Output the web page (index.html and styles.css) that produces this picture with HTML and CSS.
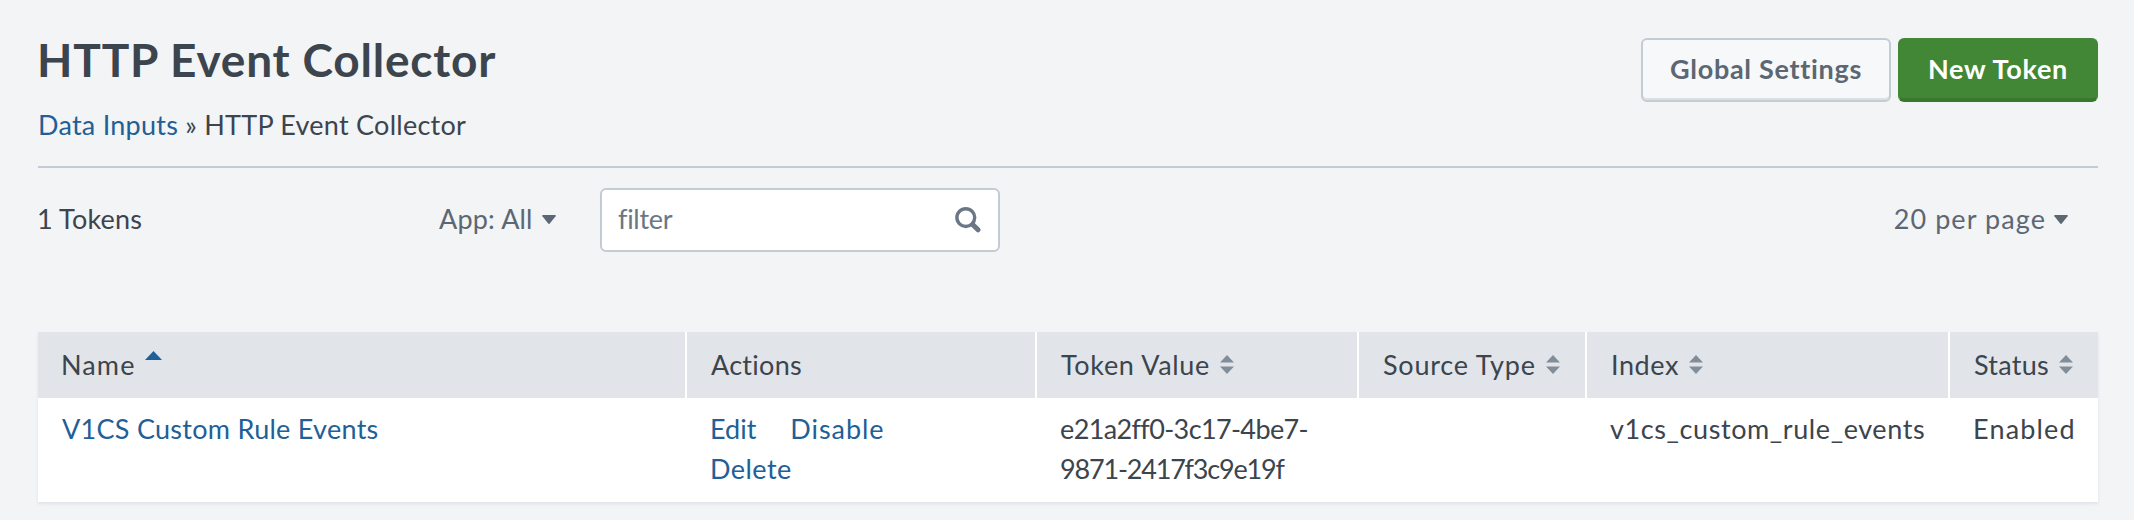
FILE: index.html
```html
<!DOCTYPE html>
<html lang="en">
<head>
<meta charset="utf-8">
<title>HTTP Event Collector</title>
<link rel="stylesheet" href="styles.css">
</head>
<body>
<main class="page">
  <header class="page-header">
    <div class="heading">
      <h1 class="title">HTTP Event Collector</h1>
      <nav class="breadcrumb"><a class="link" href="#">Data Inputs</a><span class="crumb-sep">»</span><span>HTTP Event Collector</span></nav>
    </div>
    <div class="header-actions">
      <button class="btn btn-default" type="button">Global Settings</button>
      <button class="btn btn-primary" type="button">New Token</button>
    </div>
  </header>

  <section class="toolbar">
    <div class="token-count">1 Tokens</div>
    <div class="dropdown app-filter"><span>App: All</span><svg class="caret" viewBox="0 0 14 9"><path d="M1.2 0h11.6q1.6 0 .8 1.3L8 8.3q-1 1.2-2 0L.4 1.3Q-.4 0 1.2 0z"/></svg></div>
    <div class="search">
      <span class="search-text">filter</span>
      <svg class="search-icon" viewBox="0 0 26 26"><circle cx="10.8" cy="10.6" r="8.9" fill="none" stroke="currentColor" stroke-width="3.4"/><path d="M17.6 17.4l5.4 5.4" stroke="currentColor" stroke-width="5" stroke-linecap="round"/></svg>
    </div>
    <div class="dropdown page-size"><span>20 per page</span><svg class="caret" viewBox="0 0 14 9"><path d="M1.2 0h11.6q1.6 0 .8 1.3L8 8.3q-1 1.2-2 0L.4 1.3Q-.4 0 1.2 0z"/></svg></div>
  </section>

  <table class="tokens">
    <colgroup><col class="col-name"><col class="col-actions"><col class="col-value"><col class="col-source"><col class="col-index"><col class="col-status"></colgroup>
    <thead>
      <tr>
        <th><div class="th-label th-name">Name<svg class="sort-asc" viewBox="0 0 17 9"><path d="M8.5 0L17 9H0z"/></svg></div></th>
        <th><div class="th-label th-actions">Actions</div></th>
        <th><div class="th-label th-value">Token Value<svg class="sort" viewBox="0 0 14 19"><path d="M7 0l7 7.5H0zM7 19l7-7.5H0z"/></svg></div></th>
        <th><div class="th-label th-source">Source Type<svg class="sort" viewBox="0 0 14 19"><path d="M7 0l7 7.5H0zM7 19l7-7.5H0z"/></svg></div></th>
        <th><div class="th-label th-index">Index<svg class="sort" viewBox="0 0 14 19"><path d="M7 0l7 7.5H0zM7 19l7-7.5H0z"/></svg></div></th>
        <th><div class="th-label th-status">Status<svg class="sort" viewBox="0 0 14 19"><path d="M7 0l7 7.5H0zM7 19l7-7.5H0z"/></svg></div></th>
      </tr>
    </thead>
    <tbody>
      <tr>
        <td><a class="link token-name" href="#">V1CS Custom Rule Events</a></td>
        <td><div class="row-actions"><a class="link act-edit" href="#">Edit</a><a class="link act-disable" href="#">Disable</a><a class="link act-delete" href="#">Delete</a></div></td>
        <td><span class="value-head">e21a2ff0-3c17-4be7-</span><br><span class="value-tail">9871-2417f3c9e19f</span></td>
        <td></td>
        <td><span class="index-name">v1cs_custom_rule_events</span></td>
        <td><span class="status">Enabled</span></td>
      </tr>
    </tbody>
  </table>
</main>
</body>
</html>
```

FILE: styles.css
```css
* { box-sizing: border-box; }

body {
  margin: 0;
  background: #f2f4f5;
  color: #3c444d;
  font: 27px/40px Lato, "Liberation Sans", sans-serif;
}

.page { height: 520px; padding: 32px 36px 0 38px; overflow: hidden; white-space: nowrap; }
.link { color: #225f96; text-decoration: none; }

.page-header {
  display: flex;
  justify-content: space-between;
  height: 136px;
  border-bottom: 2px solid #c3cbd4;
}
.title { margin: 0 0 0 -1px; font-size: 46px; line-height: 56px; font-weight: 700; letter-spacing: 0.8px; }
.breadcrumb { display: flex; margin-top: 17px; letter-spacing: 0.25px; }
.crumb-sep { width: 26px; padding-left: 7px; }

.header-actions { display: flex; gap: 7px; padding-top: 6px; }
.btn {
  height: 64px;
  border: 2px solid #c3cbd4;
  border-radius: 6px;
  font: 700 27px/1 Lato, "Liberation Sans", sans-serif;
}
.btn-default { width: 250px; padding: 0 0 4px; background: #f7f8fa; color: #5c6773; letter-spacing: 0.7px; box-shadow: inset 0 -2px #dcdfe2; }
.btn-primary { width: 200px; padding: 0 0 2px; border-color: #428736; border-bottom: 4px solid #3a772f; background: #428736; color: #fff; letter-spacing: 0.76px; }

.toolbar { display: flex; align-items: center; height: 84px; margin-top: 10px; }
.token-count { width: 401px; padding-bottom: 2px; letter-spacing: 0.17px; margin-left: -1px; margin-right: 1px; }
.dropdown { display: flex; align-items: center; padding-bottom: 2px; color: #5c6773; }
.caret { width: 14px; height: 9px; fill: #5c6773; }
.app-filter { width: 161px; gap: 9px; letter-spacing: 0.18px; }
.page-size { margin-left: auto; padding-right: 30px; gap: 8px; letter-spacing: 1.08px; }
.search {
  display: flex;
  align-items: center;
  justify-content: space-between;
  width: 400px;
  height: 64px;
  padding: 0 17px 0 16px;
  border: 2px solid #c3cbd4;
  border-radius: 6px;
  background: #fff;
  color: #6b7785;
}
.search-text { padding-bottom: 2px; letter-spacing: -0.3px; }
.search-icon { width: 26px; height: 26px; }

.tokens {
  width: 2060px;
  margin-top: 70px;
  border-collapse: separate;
  border-spacing: 0;
  table-layout: fixed;
  background: #fff;
  box-shadow: 0 2px 3px #dfe3e8;
}
.col-name { width: 647px; }
.col-actions { width: 350px; }
.col-value { width: 322px; }
.col-source { width: 228px; }
.col-index { width: 363px; }
.col-status { width: 150px; }

th {
  height: 66px;
  padding: 13px 0 13px 24px;
  border-left: 2px solid #fff;
  background: #e1e5ea;
  font-weight: 400;
  text-align: left;
}
th:first-child { border-left: 0; padding-left: 23px; }
.th-label { display: flex; align-items: center; }
.th-name { letter-spacing: 1.1px; }
.th-actions { letter-spacing: 0.28px; }
.th-value { letter-spacing: 0.67px; }
.th-source { letter-spacing: 0.78px; }
.th-index { letter-spacing: 0.59px; }
.th-status { letter-spacing: 0.26px; }
.sort { width: 14px; height: 19px; margin: 0 0 1px 10px; fill: #818d99; }
.sort-asc { width: 17px; height: 9px; margin: 0 0 19px 9px; fill: #225f96; }

td { height: 104px; padding: 11px 0 13px 25px; vertical-align: top; }
td:first-child { padding-left: 24px; }
.token-name { letter-spacing: 0.28px; }
.row-actions { display: flex; flex-wrap: wrap; column-gap: 34px; width: 230px; }
.act-disable { letter-spacing: 0.94px; }
.act-delete { letter-spacing: 0.45px; }
.value-head { letter-spacing: -0.63px; }
.value-tail { letter-spacing: -1.19px; }
.index-name { letter-spacing: 0.59px; }
.status { letter-spacing: 1.18px; }
```
